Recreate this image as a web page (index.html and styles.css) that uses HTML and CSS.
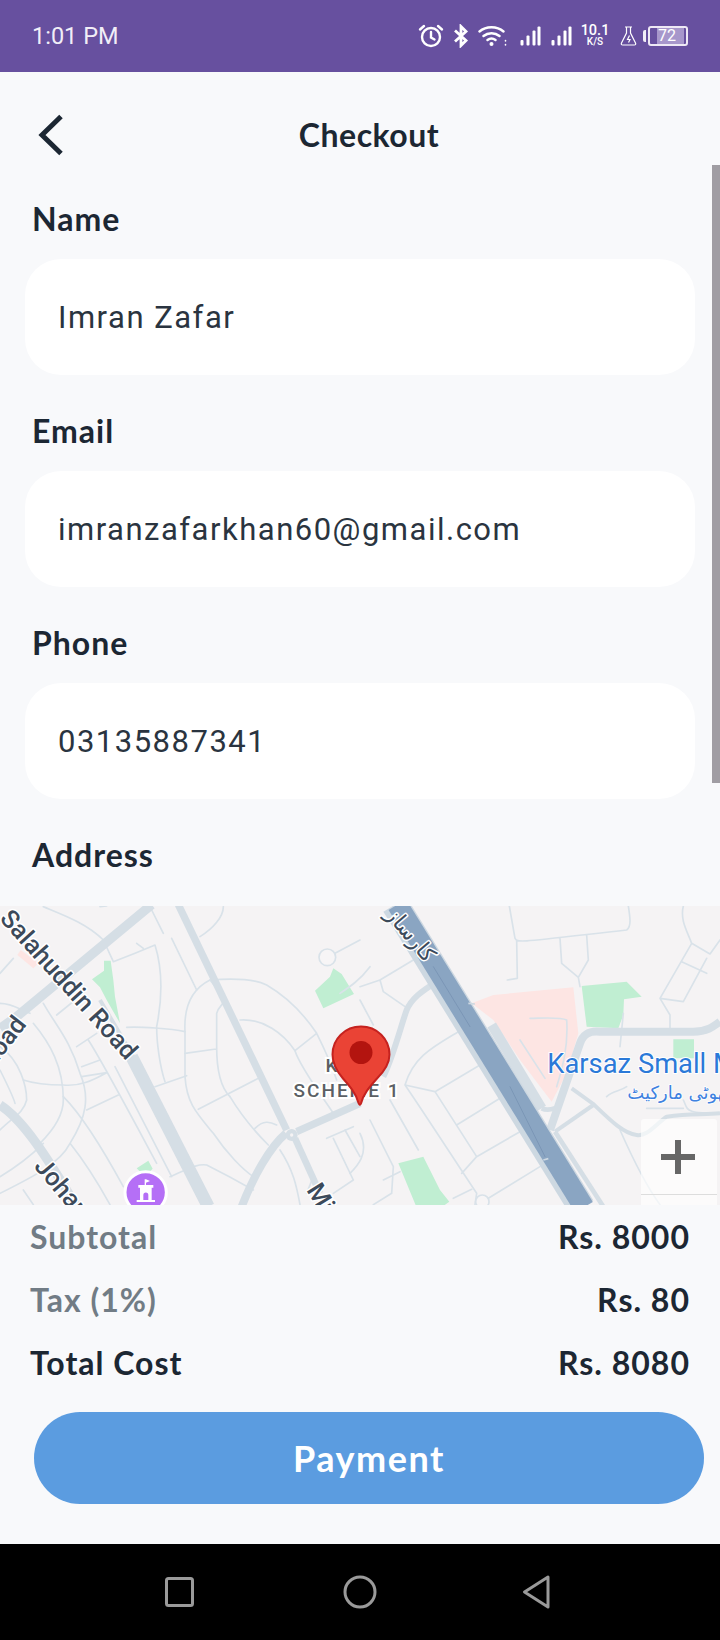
FILE: index.html
```html
<!DOCTYPE html>
<html lang="en">
<head>
    <meta charset="UTF-8">
    <meta name="viewport" content="width=device-width, initial-scale=1.0">
    <title>Checkout</title>
    <link rel="stylesheet" href="styles.css">
</head>
<body>
    <div class="status-bar">
        <span class="clock">1:01 PM</span>
        <div class="status-icons">
            <svg class="ic-alarm" width="26" height="24" viewBox="0 0 26 24" fill="none" stroke="#fff" stroke-width="2.4">
                <circle cx="13" cy="13" r="9"/>
                <path d="M13 8v5.500l3.500 2M2 5.500 6 2M24 5.500 20 2" stroke-linecap="round"/>
            </svg>
            <svg class="ic-bt" width="16" height="24" viewBox="0 0 16 24" fill="none" stroke="#fff" stroke-width="2.8">
                <path d="M2 6.500 13 16.500 8 21.500V2.500L13 7.500 2 17.500"/>
            </svg>
            <svg class="ic-wifi" width="30" height="22" viewBox="0 0 30 22" fill="none" stroke="#fff" stroke-width="2.4" stroke-linecap="round">
                <path d="M1.500 6.500C8 .8 19 .8 25.500 6.500M5.500 11C10 7.300 17 7.300 21.500 11M9.500 15C11.800 13.200 15.200 13.200 17.500 15"/>
                <circle cx="13.500" cy="19" r="2" fill="#fff" stroke="none"/>
                <path d="M27.500 15.500v.5M27.500 19.500v.5" stroke-width="1.600"/>
            </svg>
            <svg class="ic-signal" width="21" height="20" viewBox="0 0 21 20" fill="#fff">
                <rect x="0.500" y="14" width="3" height="5.500" rx="1"/>
                <rect x="6.500" y="9.500" width="3" height="10" rx="1"/>
                <rect x="12.500" y="4.500" width="3" height="15" rx="1"/>
                <rect x="17.500" y="0.500" width="3" height="19" rx="1"/>
            </svg>
            <svg class="ic-signal" width="21" height="20" viewBox="0 0 21 20" fill="#fff">
                <rect x="0.500" y="14" width="3" height="5.500" rx="1"/>
                <rect x="6.500" y="9.500" width="3" height="10" rx="1"/>
                <rect x="12.500" y="4.500" width="3" height="15" rx="1"/>
                <rect x="17.500" y="0.500" width="3" height="19" rx="1"/>
            </svg>
            <div class="speed"><span>10.1</span><small>K/S</small></div>
            <svg class="ic-flask" width="18" height="20" viewBox="0 0 18 20" fill="none" stroke="#fff" stroke-width="1.200">
                <path d="M5 1h7M6.500 1v6L1.500 17c-.6 1.200 0 2 1.200 2h11.600c1.200 0 1.800-.8 1.200-2L10.500 7V1"/>
                <path d="M9.500 9.500 7.500 13.500h2.500L8.500 16.500"/>
            </svg>
            <div class="battery">
                <span class="battery-nub"></span>
                <div class="battery-body"><span class="battery-fill"></span><span class="battery-num">72</span></div>
            </div>
        </div>
    </div>

    <div class="screen">
        <div class="scrollbar"></div>

        <div class="top-bar">
            <svg class="back" width="26" height="42" viewBox="0 0 26 42" fill="none" stroke="#1c2733" stroke-width="5">
                <path d="M23 2.500 4 21l19 18.500"/>
            </svg>
            <h1>Checkout</h1>
        </div>

        <div class="field">
            <label>Name</label>
            <div class="input">Imran Zafar</div>
        </div>
        <div class="field">
            <label>Email</label>
            <div class="input">imranzafarkhan60@gmail.com</div>
        </div>
        <div class="field">
            <label>Phone</label>
            <div class="input">03135887341</div>
        </div>
        <div class="field field-address">
            <label>Address</label>
        </div>

        <div class="map">
            <svg width="720" height="299" viewBox="0 0 720 299">
                <rect width="720" height="299" fill="#f5f3f4"/>
                <!-- left half, coords taken from a 3x crop -->
                <g transform="scale(.33333) translate(0 -18)" fill="none" stroke-linejoin="round" stroke-linecap="round">
                    <path fill="#fde5e3" d="M62 150 115 190 100 205 52 165Z"/>
                    <path fill="#c0eed2" d="M312 182 332 182 340 240 345 290 360 370 320 300 300 262 276 238 312 212ZM945 272 990 230 1000 205 1025 222 1062 282 970 325ZM410 805 445 782 458 806 435 830Z"/>
                    <g stroke="#d9e2e9" stroke-width="5">
                        <path d="M130 20C190 45 260 70 310 120L340 185C380 170 430 150 465 135 485 200 490 280 470 380 470 430 480 500 495 545"/>
                        <path d="M410 130 430 145M515 115 590 270M300 20 320 18M455 30 490 100M600 110C640 85 670 50 670 20"/>
                        <path d="M380 382C420 380 510 385 555 395M555 395C550 300 590 260 630 240 690 235 760 235 800 255 860 290 910 340 950 400L885 452M950 400C970 440 990 480 1010 540"/>
                        <path d="M650 440V340C660 300 700 325 630 240M650 440C650 500 660 560 690 590M720 360C790 355 850 400 885 452 900 500 960 580 1000 640M555 460 648 447M465 560 560 527M595 628 775 535"/>
                        <path d="M555 395V530C560 610 590 640 640 700 680 760 730 810 760 830M690 590C720 640 770 700 805 735M765 685C790 660 810 665 830 675"/>
                        <path d="M130 310C170 380 210 420 240 520 270 590 260 650 210 730 180 790 100 830 0 880M245 500 300 480M245 530 320 518C280 540 240 560 190 555 130 555 100 550 70 540M260 630 355 585M190 590C240 640 310 750 370 860M210 730C250 780 300 860 330 914"/>
                        <path d="M170 345 250 280M230 440 290 400M265 420C310 490 400 660 470 790M345 500 515 830M510 830C560 810 590 790 620 795 650 810 690 830 760 870M0 440C60 480 80 560 80 600 70 640 40 650 0 690M0 510C20 550 40 590 45 610M100 370C150 430 190 500 190 600 190 650 150 700 120 730M0 830C50 800 90 770 130 730M70 870 100 914M0 220 40 175M0 310C40 310 60 330 90 340"/>
                        <path d="M980 715 1060 680M1000 715 1060 840M1035 690 1080 770M840 750C880 810 890 860 900 914M1060 840 1000 880M940 830 920 880"/>
                        <path d="M1080 120 1005 160"/>
                    </g>
                    <circle cx="982" cy="172" r="25" fill="#f7f5f6" stroke="#d9e2e9" stroke-width="5"/>
                    <g stroke="#d5dee5" stroke-linecap="butt">
                        <path d="M455 14 50 350 0 385" stroke-width="28"/>
                        <path d="M395 470 625 920" stroke-width="38"/>
                        <path d="M300 300 400 470" stroke-width="12"/>
                        <path d="M535 14 860 690" stroke-width="22"/>
                        <path d="M858 700C810 740 760 830 725 920" stroke-width="24"/>
                        <path d="M885 715 960 880" stroke-width="20"/>
                        <path d="M890 695 1080 610" stroke-width="22"/>
                        <path d="M0 615C70 660 140 770 230 920" stroke-width="28"/>
                    </g>
                    <circle cx="875" cy="705" r="18" fill="#d5dee5"/>
                    <circle cx="875" cy="705" r="5" fill="#f5f3f4"/>

                    <text class="road-label" transform="translate(-4 58) rotate(48)">Salahuddin Road</text>
                    <text class="road-label" transform="translate(-26 511) rotate(-52)">Road</text>
                    <text class="road-label" transform="translate(100 800) rotate(50)">Johar</text>
                    <text class="road-label" transform="translate(918 870) rotate(58)">Mir</text>

                    <circle cx="437" cy="877" r="62" fill="#b56ff6" stroke="#fff" stroke-width="9"/>
                    <path fill="#fff" stroke="none" d="M415 855H460V863H455V900H445V885A7 7 0 0 0 430 885V900H420V863H415ZM410 900H465V906H410ZM434 838H438V855H434ZM438 838 450 843 438 848Z"/>
                </g>

                <!-- right half -->
                <g transform="translate(360 0) scale(.33333) translate(0 -18)" fill="none" stroke-linejoin="round" stroke-linecap="round">
                    <path fill="#fde5e3" d="M335 310 400 285 640 262 655 400 620 520 575 605 480 480 400 360Z"/>
                    <path fill="#c0eed2" d="M665 258 800 245 845 290 792 298 790 345 775 385 680 380ZM940 418H1002V475H940ZM115 790 190 770 240 870 268 905 250 918H168Z"/>
                    <g stroke="#d9e2e9" stroke-width="5">
                        <path d="M448 18 465 115C470 130 490 125 800 90 815 80 810 50 805 18M600 115 605 190 655 232 685 180 680 105M655 232 660 260M470 120 472 235 442 240M970 18C960 60 980 90 995 130 L900 295M995 130 1050 162 1080 120M965 185 1040 220M1040 175 970 305 900 295 930 345 930 385M790 340 780 440"/>
                        <path d="M30 200C0 240 -30 260 -60 280M60 240 160 180M60 240 70 275 135 320M0 300 40 375M0 260 60 240"/>
                        <path d="M295 395C220 440 160 470 135 555L225 575 360 495M225 575 350 770 480 695M135 555C200 650 290 790 350 880L345 914M290 675 420 595M90 600 175 750M30 660 100 800 95 880 40 914M0 700C30 760 -10 800 -30 820M70 840 120 815M350 770 305 820M385 895 540 800M280 895 335 868"/>
                        <path d="M510 355C540 355 600 350 620 360 625 430 610 500 590 560M480 420 555 535M740 590C760 570 780 575 800 560M860 625H970M970 600C985 630 970 640 1080 640M780 690C820 780 860 860 900 914"/>
                    </g>
                    <circle cx="367" cy="905" r="20" fill="#f7f5f6" stroke="#d9e2e9" stroke-width="5"/>
                    <g stroke="#d5dee5" stroke-linecap="butt">
                        <path d="M70 530C100 470 125 370 140 330 155 295 185 275 215 255" stroke-width="18"/>
                        <path d="M635 565 700 612C750 660 790 700 830 705 860 710 880 680 920 650 990 640 1030 645 1080 640" stroke-width="12"/>
                        <path d="M570 690 660 430C670 400 690 392 720 395H1000C1040 395 1060 380 1080 365" stroke-width="24"/>
                        <path d="M585 695 700 615" stroke-width="12"/>
                        <path d="M585 695 730 920" stroke-width="14"/>
                        <path d="M395 375 545 625" stroke-width="30"/>
                        <path d="M545 625C555 630 570 630 585 625" stroke-width="14"/>
                    </g>
                    <path d="M105 14 665 922" stroke="#cdd8e1" stroke-width="82" stroke-linecap="butt"/>
                    <path d="M112 14 672 922" stroke="#8aa5c2" stroke-width="62" stroke-linecap="butt"/>
                    <path d="M220 200 330 380M450 560 555 770" stroke="#7a96b6" stroke-width="3"/>
                    <path d="M325 310 345 312M550 780 565 776" stroke="#cdd8e1" stroke-width="5" stroke-linecap="butt"/>

                    <text class="road-label road-urdu" transform="translate(135 118) rotate(50)" text-anchor="middle">کارساز</text>
                    <text class="place-label" x="562" y="518">Karsaz Small Market</text>
                    <text class="place-urdu" x="802" y="597" text-anchor="end">کارساز چھوٹی مارکیٹ</text>
                </g>

                <!-- area label and pin go over both halves -->
                <text class="area-label" x="347" y="166" text-anchor="middle">KDA</text>
                <text class="area-label" x="347" y="191" text-anchor="middle">SCHEME 1</text>
                <g transform="translate(0 -1.500)">
                    <path fill="#ea4335" stroke="#c5221f" stroke-width="2" d="M361 122C345 122 332.500 134.500 332.500 150C332.500 160 337 167 343 174C350 182 356 189 358.500 198.500C359.200 200.500 360.200 201 361 199C363.500 189 370 182 377 174C384 167 389.500 160 389.500 150C389.500 134.500 377 122 361 122Z"/>
                    <circle cx="361" cy="148" r="11.500" fill="#b3140f"/>
                </g>
            </svg>
            <div class="zoom-box">
                <span class="zoom-plus"></span>
            </div>
        </div>

        <div class="summary">
            <div class="row muted"><span>Subtotal</span><span class="amount">Rs. 8000</span></div>
            <div class="row muted"><span>Tax (1%)</span><span class="amount">Rs. 80</span></div>
            <div class="row"><span>Total Cost</span><span class="amount">Rs. 8080</span></div>
        </div>

        <a href="#" class="pay-btn">Payment</a>
    </div>

    <div class="nav-bar">
        <svg width="30" height="30" viewBox="0 0 30 30" fill="none" stroke="#9a9a9a" stroke-width="3" stroke-linejoin="round">
            <rect x="1.500" y="1.500" width="26" height="27" rx="2"/>
        </svg>
        <svg width="34" height="34" viewBox="0 0 34 34" fill="none" stroke="#9a9a9a" stroke-width="3">
            <circle cx="17" cy="17" r="15"/>
        </svg>
        <svg class="nav-back" width="30" height="34" viewBox="0 0 30 34" fill="none" stroke="#9a9a9a" stroke-width="3" stroke-linejoin="round">
            <path d="M26 2V32L2.500 17Z"/>
        </svg>
    </div>
</body>
</html>
```

FILE: styles.css
```css
* {
    box-sizing: border-box;
}
body {
    margin: 0;
    width: 720px;
    height: 1640px;
    display: flex;
    flex-direction: column;
    overflow: hidden;
    background-color: #f8f9fb;
    color: #1c2733;
    font-family: Lato, "Open Sans", sans-serif;
}

/* status bar */
.status-bar {
    height: 72px;
    flex: none;
    display: flex;
    align-items: center;
    justify-content: space-between;
    padding: 0 32px;
    background-color: #67509f;
    color: #fff;
    font-family: Roboto, sans-serif;
}
.clock {
    font-size: 23.5px;
    color: #f1eef7;
}
.status-icons {
    display: flex;
    align-items: center;
}
.ic-alarm {
    margin-right: 9px;
}
.ic-bt {
    margin-right: 9px;
}
.ic-wifi {
    margin-right: 12px;
}
.ic-signal {
    margin-right: 10px;
}
.speed {
    width: 28px;
    margin-right: 11px;
    margin-left: -1px;
    display: flex;
    flex-direction: column;
    align-items: center;
    line-height: 1;
    font-size: 14.5px;
    font-weight: 500;
}
.speed span {
    line-height: 12px;
}
.speed small {
    font-size: 10px;
    line-height: 10px;
}
.ic-flask {
    margin-right: 5px;
}
.battery {
    display: flex;
    align-items: center;
}
.battery-nub {
    width: 3px;
    height: 12px;
    margin-right: 2px;
    background-color: #f1eef7;
    border-radius: 2px 0 0 2px;
}
.battery-body {
    position: relative;
    width: 40px;
    height: 20px;
    border: 2px solid #eee9f5;
    border-radius: 3px;
    overflow: hidden;
}
.battery-fill {
    position: absolute;
    left: 7px;
    top: 0;
    bottom: 0;
    right: 2px;
    background-color: #a797cb;
}
.battery-num {
    position: absolute;
    left: 8px;
    top: -1px;
    font-size: 16px;
    line-height: 18px;
    color: #fff;
}

/* main screen */
.screen {
    position: relative;
    flex: 1;
    display: flex;
    flex-direction: column;
}
.scrollbar {
    position: absolute;
    top: 93px;
    right: 0;
    width: 8px;
    height: 618px;
    background-color: #a09da3;
}
.top-bar {
    position: relative;
    height: 126px;
    flex: none;
    display: flex;
    align-items: center;
    justify-content: center;
}
.top-bar h1 {
    margin: 0 0 2px 18px;
    font-size: 32px;
    font-weight: 700;
    letter-spacing: 0.5px;
}
.back {
    position: absolute;
    left: 38px;
    top: 42px;
}
.field {
    height: 212px;
    flex: none;
    padding: 1px 25px 0;
}
.field label {
    display: block;
    height: 40px;
    padding-left: 7px;
    line-height: 40px;
    font-size: 32px;
    font-weight: 700;
    letter-spacing: 1px;
}
.input {
    height: 116px;
    margin-top: 20px;
    padding-left: 33px;
    width: 670px;
    display: flex;
    align-items: center;
    background-color: #fff;
    border-radius: 36px;
    font-family: Roboto, sans-serif;
    font-size: 31px;
    letter-spacing: 1.5px;
    color: #2a3440;
}
.field-address {
    height: 72px;
}
.map {
    position: relative;
    height: 299px;
    flex: none;
    overflow: hidden;
}
.map svg {
    display: block;
}
.road-label {
    font-family: Roboto, sans-serif;
    font-size: 76px;
    font-weight: 500;
    fill: #3c4a5a;
    stroke: #fff;
    stroke-width: 9px;
    paint-order: stroke;
    stroke-linecap: round;
}
.road-urdu {
    font-family: "DejaVu Sans", sans-serif;
    font-size: 66px;
}
.place-label {
    font-family: Roboto, sans-serif;
    font-size: 82px;
    fill: #2b79d8;
    stroke: #fff;
    stroke-width: 6px;
    paint-order: stroke;
}
.place-urdu {
    font-family: "DejaVu Sans", sans-serif;
    font-size: 54px;
    direction: rtl;
    fill: #3f82e0;
    stroke: #fff;
    stroke-width: 5px;
    paint-order: stroke;
}
.area-label {
    font-family: Roboto, sans-serif;
    font-size: 19px;
    font-weight: 500;
    letter-spacing: 2px;
    fill: #5b5f64;
    stroke: #fff;
    stroke-width: 4px;
    paint-order: stroke;
}
.zoom-box {
    position: absolute;
    left: 641px;
    top: 213px;
    width: 76px;
    height: 90px;
    background-color: rgba(255, 255, 255, 0.65);
    border-radius: 3px;
    border-bottom: 1px solid #ddd;
}
.zoom-box::after {
    content: "";
    position: absolute;
    left: 0;
    right: 0;
    top: 75px;
    height: 1px;
    background-color: #ddd;
}
.zoom-plus {
    position: absolute;
    left: 20px;
    top: 21px;
    width: 34px;
    height: 34px;
    background:
        linear-gradient(#666, #666) center / 34px 6px no-repeat,
        linear-gradient(#666, #666) center / 6px 34px no-repeat;
}

/* totals */
.summary {
    flex: none;
    padding: 0 30px;
}
.row {
    height: 63px;
    display: flex;
    align-items: center;
    justify-content: space-between;
    font-size: 32px;
    font-weight: 700;
    letter-spacing: 1px;
}
.muted {
    color: #717c85;
}
.amount {
    color: #1c2733;
}
.pay-btn {
    width: 670px;
    height: 92px;
    margin: 18px 0 0 34px;
    flex: none;
    display: flex;
    align-items: center;
    justify-content: center;
    background-color: #5b9ce0;
    border-radius: 46px;
    color: #fff;
    font-size: 36px;
    font-weight: 700;
    letter-spacing: 1.5px;
    text-decoration: none;
}

/* android nav */
.nav-bar {
    height: 96px;
    flex: none;
    display: flex;
    align-items: center;
    background-color: #000;
    padding-left: 165px;
    gap: 148px;
}
.nav-back {
    margin-left: -3px;
}
```
